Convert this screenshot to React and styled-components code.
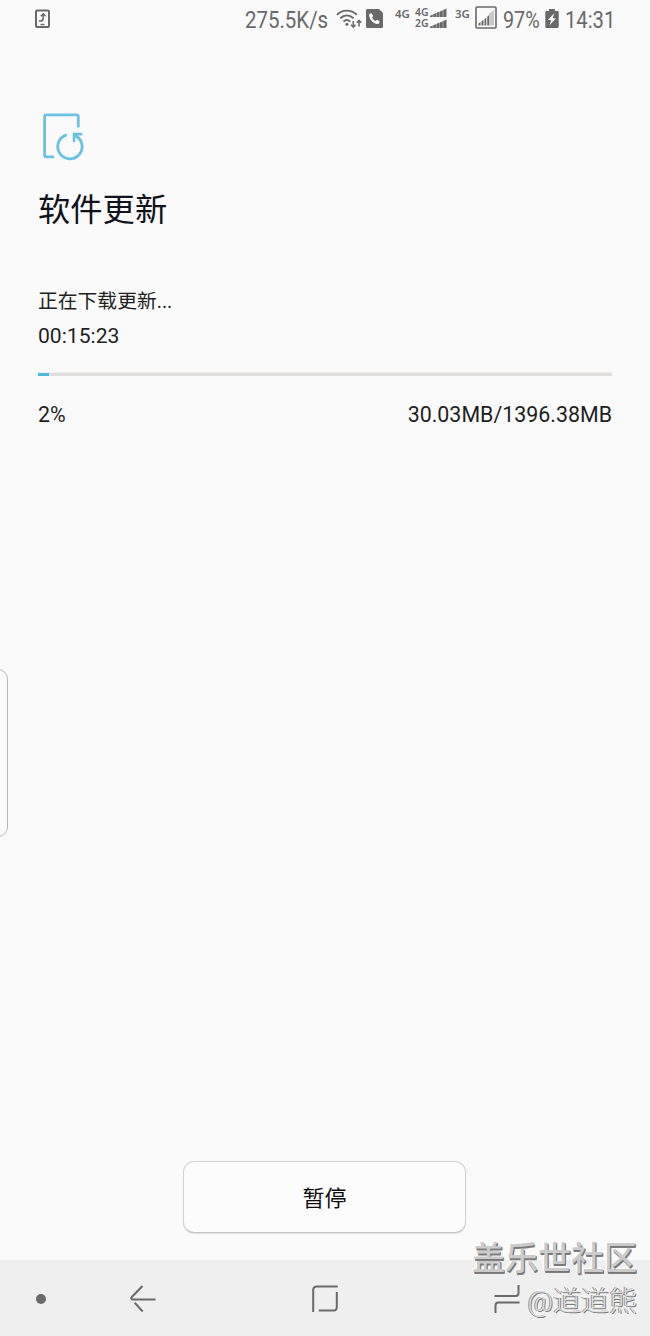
import styled, { createGlobalStyle } from "styled-components";

const GlobalStyle = createGlobalStyle`
  * {
    box-sizing: border-box;
  }
  body {
    margin: 0;
    background-color: #fafafa;
    font-family: Roboto, "Noto Sans CJK SC", sans-serif;
  }
`;

const Screen = styled.div`
  position: relative;
  display: flex;
  flex-direction: column;
  width: 650px;
  height: 1336px;
  overflow: hidden;
  background-color: #fafafa;
  color: #1f1f1f;
`;

const StatusBar = styled.header`
  display: flex;
  align-items: flex-start;
  height: 40px;
  padding-left: 34px;
  color: #696969;
  svg {
    display: block;
    flex-shrink: 0;
  }
`;

const StatusItem = styled.div`
  flex-shrink: 0;
  width: ${(props) => props.$width}px;
  margin-left: ${(props) => props.$gap || 0}px;
  padding-top: ${(props) => props.$top || 0}px;
`;

const StatusText = styled.span`
  display: block;
  width: max-content;
  font-size: 23.5px;
  line-height: 40px;
  transform: scaleX(${(props) => props.$stretch});
  transform-origin: left center;
`;

const NetworkLabel = styled.span`
  display: block;
  width: max-content;
  font-family: "Noto Sans", sans-serif;
  font-size: 11.5px;
  font-weight: 600;
  line-height: 11px;
`;

const DualSim = styled.div`
  display: grid;
  grid-template-columns: 15px 17px;
  grid-auto-rows: 11px;
  align-items: center;
  ${NetworkLabel} {
    font-size: 10.5px;
    line-height: 11px;
  }
`;

const Content = styled.main`
  display: flex;
  flex-direction: column;
  flex: 1;
  padding: 72px 38px 0;
`;

const UpdateIcon = styled.svg`
  display: block;
  width: 44px;
  height: 50px;
  margin-left: 4px;
`;

const Title = styled.h1`
  margin: 24px 0 0;
  font-size: 32.3px;
  font-weight: 400;
  line-height: 48px;
  color: #10131c;
`;

const Message = styled.p`
  margin: 51px 0 0;
  font-size: 19.8px;
  line-height: 34px;
`;

const TimeLeft = styled.p`
  margin: 0;
  font-size: 21.1px;
  line-height: 34px;
`;

const ProgressTrack = styled.div`
  height: 4px;
  margin-top: 19px;
  border-top: 1px solid #ededec;
  background-color: #e1dfde;
`;

const ProgressFill = styled.div`
  height: 3px;
  background-color: #4fb9df;
`;

const ProgressInfo = styled.div`
  display: flex;
  justify-content: space-between;
  margin-top: 23px;
  font-size: 21.4px;
  line-height: 32px;
`;

const PauseButton = styled.button`
  align-self: center;
  width: 283px;
  height: 72px;
  margin: auto 1px 27px 0;
  padding: 0 0 3px;
  border: 1px solid #d2d2d2;
  border-bottom-color: #c6c6c6;
  border-radius: 11px;
  background-color: #fcfcfc;
  box-shadow: 0 1px 1px rgba(0, 0, 0, 0.1);
  color: #0c0c0c;
  font-family: inherit;
  font-size: 22px;
  font-weight: 400;
`;

const NavBar = styled.nav`
  display: grid;
  grid-template-columns: 82px 122px 242px 122px;
  align-items: center;
  justify-items: center;
  height: 76px;
  padding-top: 1px;
  background-color: #efefef;
  color: #6a6a6a;
`;

const EdgeHandle = styled.div`
  position: absolute;
  top: 669px;
  left: -20px;
  width: 28px;
  height: 168px;
  border: 1px solid #b9b9b9;
  border-radius: 10px;
`;

const Watermark = styled.div`
  position: absolute;
  right: 13px;
  bottom: 13px;
  display: flex;
  flex-direction: column;
  align-items: flex-end;
  white-space: nowrap;
`;

const Community = styled.span`
  font-size: 33px;
  font-weight: 500;
  line-height: 44px;
  color: #cbcbcb;
  text-shadow: 1px 1px 0 #777, 1px 2px 0 #808080, -1px -1px 1px #fff, 0 0 3px #fff;
`;

const Author = styled.span`
  font-size: 28px;
  font-weight: 300;
  line-height: 42px;
  color: #dedede;
  text-shadow: 1px 1px 0 #7c7c7c, -1px 0 0 #909090, 0 0 3px #fff, 0 0 3px #fff;
`;

const RotateIcon = () => (
  <svg width="17" height="20" viewBox="0 0 17 20" fill="none" stroke="currentColor">
    <rect x="2" y="1.5" width="13" height="16.5" rx="1" strokeWidth="2" />
    <path d="M4.8 12h1.5c2 0 2.8-1 2.8-2.6V5.5M6.8 7.3L9.3 4.8l2.4 2.5" strokeWidth="1.6" />
    <path d="M6.5 15.5h4" strokeWidth="1.4" />
  </svg>
);

const WifiIcon = () => (
  <svg width="27" height="20" viewBox="0 0 27 20" fill="none" stroke="currentColor">
    <path d="M1 5.8C6.5.2 15 .2 20.8 5.8M4.3 9.3c4-3.800 9.200-3.800 13.200 0M7.500 12.600c2-1.900 4.800-1.900 6.800 0" strokeWidth="1.9" />
    <circle cx="10.900" cy="15.300" r="1.500" fill="currentColor" stroke="none" />
    <path d="M17.300 12v6M15 15.800l2.300 2.400 2.300-2.400M23 17.500v-6M20.800 13.700l2.200-2.400 2.300 2.400" strokeWidth="1.6" />
  </svg>
);

const CallIcon = () => (
  <svg width="17" height="19" viewBox="0 0 17 19">
    <path d="M1.500 0H13l4 4v13.500a1.500 1.500 0 0 1-1.500 1.500h-14A1.500 1.500 0 0 1 0 17.500v-16A1.500 1.500 0 0 1 1.500 0z" fill="currentColor" />
    <path d="M3.300 5.100l2-1 2 3-1.200 1.400c.7 1.600 1.900 2.800 3.500 3.500l1.500-1.200 2.600 1.800-.8 2.200c-4.800 1.100-10.400-4-9.600-9.700z" fill="#fafafa" />
  </svg>
);

const MiniSignal = () => (
  <svg width="17" height="9" viewBox="0 0 17 9" fill="currentColor">
    <path d="M0 9V7.800L2.800 6.600V9zM3.200 9V6.300L6.200 5V9zM6.600 9V4.800l2.900-1.200V9zM9.900 9V3.400l2.900-1.200V9zM13.200 9V1.900L16.500.5V9z" />
  </svg>
);

const SignalIcon = () => (
  <svg width="22" height="23" viewBox="0 0 22 23">
    <rect x="1" y="1" width="20" height="21" rx="1" fill="none" stroke="currentColor" strokeWidth="1.6" />
    <path d="M14 8l5-4v15.500h-5z" fill="#c9c9c9" />
    <path d="M3.500 19.500v-2l2-1.400v3.400zM6.500 19.500v-4.300l2-1.400v5.700zM9.500 19.500V13l1.800-1.300v7.800zM12.300 19.500v-9l1.700-1.200v10.200z" fill="currentColor" />
  </svg>
);

const BatteryIcon = () => (
  <svg width="14" height="19" viewBox="0 0 14 19">
    <path d="M4 0h6v2h2.500c.8 0 1.200.5 1.200 1.200v14.400c0 .8-.5 1.400-1.200 1.400h-11C.8 19 .3 18.400.3 17.600V3.200C.3 2.500.8 2 1.500 2H4z" fill="currentColor" />
    <path d="M9.500 4L3 10.800l3.200.5L4.300 16.500l6.600-7-3.300-.4z" fill="#fafafa" />
  </svg>
);

const BackIcon = () => (
  <svg width="26" height="28" viewBox="0 0 26 28" fill="none" stroke="currentColor" strokeWidth="2">
    <path d="M12.500 1L2 11.800c-1.300 1.400-.8 2.700.8 2.700H25.500M4.700 17.800l8 8.700" />
  </svg>
);

const HomeIcon = () => (
  <svg width="26" height="28" viewBox="0 0 26 28" fill="none" stroke="currentColor" strokeWidth="2">
    <path d="M1.200 27V5c0-2.400 1.100-3.600 3.500-3.600h21M6.800 25.600h14.600c2.400 0 3.400-1.200 3.400-3.600V7" />
  </svg>
);

const RecentsIcon = () => (
  <svg width="26" height="30" viewBox="0 0 26 30" fill="none" stroke="currentColor" strokeWidth="2">
    <path d="M.5 12h21c2 0 3-1 3-3V1M1.500 29v-7.500c0-2 1-3 3-3h21" />
  </svg>
);

const App = () => {
  const percent = 2;

  return (
    <>
      <GlobalStyle />
      <Screen>
        <StatusBar>
          <StatusItem $width={17} $top={9}>
            <RotateIcon />
          </StatusItem>
          <StatusItem $width={84} $gap={194}>
            <StatusText $stretch={0.87}>275.5K/s</StatusText>
          </StatusItem>
          <StatusItem $width={27} $gap={7} $top={9}>
            <WifiIcon />
          </StatusItem>
          <StatusItem $width={17} $gap={3} $top={9}>
            <CallIcon />
          </StatusItem>
          <StatusItem $width={16} $gap={12} $top={8}>
            <NetworkLabel>4G</NetworkLabel>
          </StatusItem>
          <StatusItem $width={32} $gap={4} $top={7}>
            <DualSim>
              <NetworkLabel>4G</NetworkLabel>
              <MiniSignal />
              <NetworkLabel>2G</NetworkLabel>
              <MiniSignal />
            </DualSim>
          </StatusItem>
          <StatusItem $width={16} $gap={8} $top={8}>
            <NetworkLabel>3G</NetworkLabel>
          </StatusItem>
          <StatusItem $width={22} $gap={4} $top={6}>
            <SignalIcon />
          </StatusItem>
          <StatusItem $width={37} $gap={6}>
            <StatusText $stretch={0.84}>97%</StatusText>
          </StatusItem>
          <StatusItem $width={14} $gap={5} $top={9}>
            <BatteryIcon />
          </StatusItem>
          <StatusItem $width={50} $gap={6}>
            <StatusText $stretch={0.86}>14:31</StatusText>
          </StatusItem>
        </StatusBar>

        <Content>
          <UpdateIcon viewBox="0 0 44 50" fill="none" stroke="#6bc2e3" strokeWidth="2.8">
            <path d="M36.300 15.500V4.500q0-1.600-1.600-1.600H4.200q-1.600 0-1.600 1.600v38.800q0 1.600 1.600 1.600h8" />
            <path d="M24.800 22.800A12.200 12.200 0 1 0 34.800 24.500L33 22.800" />
            <path d="M30.800 20.800h9.500v2.600h-5l-2 2v4.600h-2.500z" fill="#6bc2e3" stroke="none" />
          </UpdateIcon>
          <Title>软件更新</Title>
          <Message>正在下载更新...</Message>
          <TimeLeft>00:15:23</TimeLeft>
          <ProgressTrack>
            <ProgressFill style={{ width: `${percent}%` }} />
          </ProgressTrack>
          <ProgressInfo>
            <span>{percent}%</span>
            <span>30.03MB/1396.38MB</span>
          </ProgressInfo>
          <PauseButton>暂停</PauseButton>
        </Content>

        <NavBar>
          <svg width="10" height="10" viewBox="0 0 10 10" fill="currentColor">
            <circle cx="5" cy="5" r="5" />
          </svg>
          <BackIcon />
          <HomeIcon />
          <RecentsIcon />
        </NavBar>

        <EdgeHandle />
        <Watermark>
          <Community>盖乐世社区</Community>
          <Author>@道道熊</Author>
        </Watermark>
      </Screen>
    </>
  );
};

export default App;
